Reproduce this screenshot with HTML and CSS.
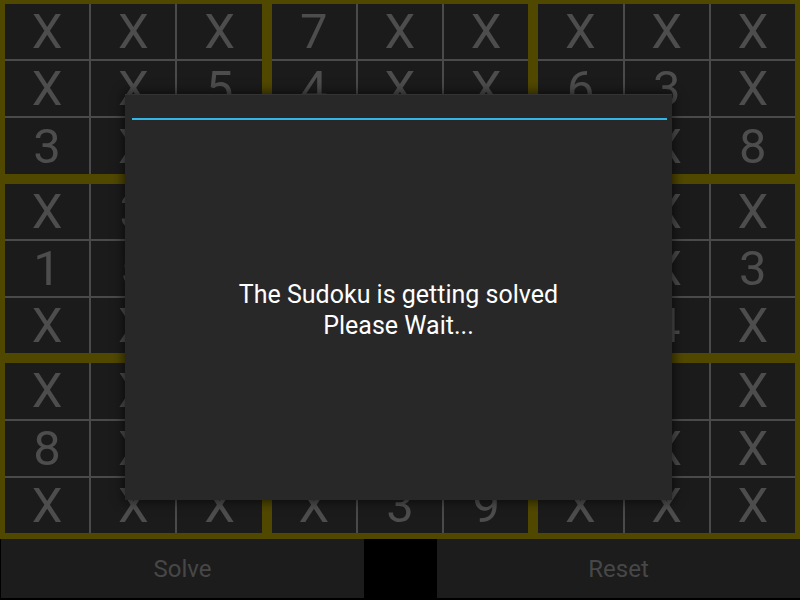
FILE: index.html
```html
<!DOCTYPE html>
<html>
<head>
<meta charset="utf-8">
<link rel="stylesheet" href="styles.css">
</head>
<body>
<div class="screen">
  <div class="board">
    <div class="block"><div class="cell">X</div><div class="cell">X</div><div class="cell">X</div><div class="cell">X</div><div class="cell">X</div><div class="cell">5</div><div class="cell">3</div><div class="cell">X</div><div class="cell">X</div></div>
    <div class="block"><div class="cell">7</div><div class="cell">X</div><div class="cell">X</div><div class="cell">4</div><div class="cell">X</div><div class="cell">X</div><div class="cell">X</div><div class="cell">X</div><div class="cell">X</div></div>
    <div class="block"><div class="cell">X</div><div class="cell">X</div><div class="cell">X</div><div class="cell">6</div><div class="cell">3</div><div class="cell">X</div><div class="cell">X</div><div class="cell">X</div><div class="cell">8</div></div>
    <div class="block"><div class="cell">X</div><div class="cell">3</div><div class="cell">X</div><div class="cell">1</div><div class="cell">5</div><div class="cell">X</div><div class="cell">X</div><div class="cell">X</div><div class="cell">X</div></div>
    <div class="block"><div class="cell">X</div><div class="cell">X</div><div class="cell">X</div><div class="cell">X</div><div class="cell">X</div><div class="cell">X</div><div class="cell">X</div><div class="cell">X</div><div class="cell">X</div></div>
    <div class="block"><div class="cell">X</div><div class="cell">X</div><div class="cell">X</div><div class="cell">X</div><div class="cell">X</div><div class="cell">3</div><div class="cell">X</div><div class="cell">4</div><div class="cell">X</div></div>
    <div class="block"><div class="cell">X</div><div class="cell">X</div><div class="cell">X</div><div class="cell">8</div><div class="cell">X</div><div class="cell">X</div><div class="cell">X</div><div class="cell">X</div><div class="cell">X</div></div>
    <div class="block"><div class="cell">X</div><div class="cell">X</div><div class="cell">X</div><div class="cell">X</div><div class="cell">X</div><div class="cell">X</div><div class="cell">X</div><div class="cell">3</div><div class="cell">9</div></div>
    <div class="block"><div class="cell">X</div><div class="cell">1</div><div class="cell">X</div><div class="cell">X</div><div class="cell">X</div><div class="cell">X</div><div class="cell">X</div><div class="cell">X</div><div class="cell">X</div></div>
  </div>
  <div class="actions">
    <div class="btn">Solve</div>
    <div class="spacer"></div>
    <div class="btn">Reset</div>
  </div>
  <div class="dialog">
    <div class="dialog-title"></div>
    <div class="dialog-divider"></div>
    <div class="dialog-body">
      <p class="message">The Sudoku is getting solved<br>Please Wait...</p>
    </div>
  </div>
</div>
</body>
</html>
```
FILE: styles.css
```css
html, body {
  margin: 0;
  padding: 0;
  background: #000;
}
.screen {
  position: relative;
  width: 800px;
  height: 600px;
  overflow: hidden;
  font-family: Roboto, "Liberation Sans", sans-serif;
  display: flex;
  flex-direction: column;
}
.board {
  height: 539px;
  box-sizing: border-box;
  background: #514800;
  padding: 4px 5px 6px 5px;
  display: grid;
  grid-template-columns: repeat(3, 1fr);
  grid-template-rows: repeat(3, 1fr);
  gap: 10px;
}
.block {
  background: #4a4a4a;
  display: grid;
  grid-template-columns: repeat(3, 1fr);
  grid-template-rows: repeat(3, 1fr);
  gap: 2px;
}
.cell {
  background: #1b1b1b;
  color: #4d4d4d;
  font-size: 49px;
  display: flex;
  align-items: center;
  justify-content: center;
  line-height: 1;
}
.actions {
  height: 61px;
  display: grid;
  grid-template-columns: 363px 73px 1fr;
  padding: 0 0 2px 1px;
  box-sizing: border-box;
}
.btn {
  background: #1c1c1c;
  color: #474747;
  font-size: 24px;
  display: flex;
  align-items: center;
  justify-content: center;
}
.spacer {
  background: #000;
}
.dialog {
  position: absolute;
  left: 125px;
  top: 94px;
  width: 547px;
  height: 406px;
  background: #282828;
  border-top: 1px solid #333;
  box-sizing: border-box;
  box-shadow: 0 0 10px 2px rgba(0, 0, 0, 0.55);
  display: flex;
  flex-direction: column;
}
.dialog-title {
  height: 23px;
}
.dialog-divider {
  height: 2px;
  background: #33b5e5;
  margin: 0 5px 0 7px;
}
.dialog-body {
  flex: 1;
  display: flex;
  align-items: center;
  justify-content: center;
}
.message {
  margin: 0;
  color: #fff;
  font-size: 25px;
  line-height: 31px;
  text-align: center;
}
```
